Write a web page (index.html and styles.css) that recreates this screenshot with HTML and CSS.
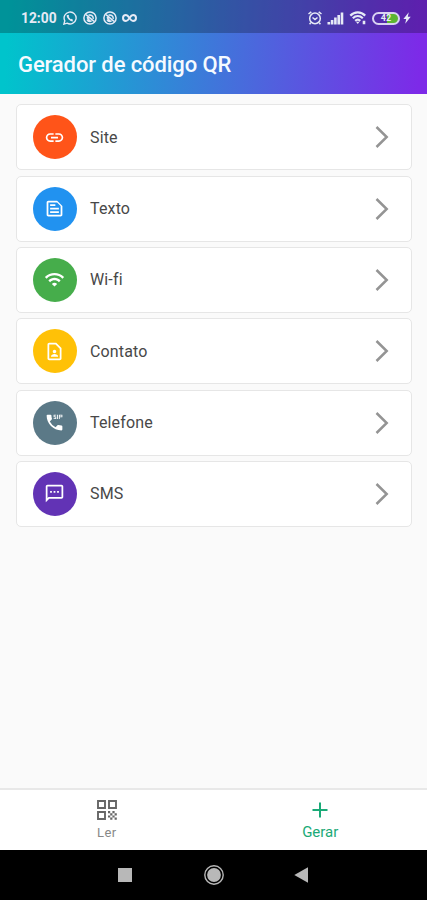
FILE: index.html
```html
<!DOCTYPE html>
<html lang="pt-BR">
<head>
<meta charset="utf-8">
<meta name="viewport" content="width=device-width, initial-scale=1">
<title>Gerador de código QR</title>
<link rel="stylesheet" href="styles.css">
</head>
<body>
<div class="screen">
  <header class="header">
    <div class="status">
      <div class="status-left">
        <span class="clock">12:00</span>
        <svg class="s-icon" viewBox="0 0 14 14" fill="none" stroke="currentColor" stroke-width="1.4"><path d="M.9 13.1l.9-3.3a6 6 0 1 1 2.3 2.4z"/><path d="M4.6 4.2c-.6 2 2.8 5.7 5 5.4M4.6 4.2l.9 1.6M9.6 9.6L8 8.4" stroke-width="1.8"/></svg>
        <svg class="s-icon" viewBox="0 0 14 14" fill="none" stroke="currentColor" stroke-width="1.5"><circle cx="7" cy="7" r="6.1"/><path d="M3 3.6l8 6.8M4 8.600a3.400 3.400 0 0 0 4.600 1.300M5.600 4.200a3.400 3.400 0 0 1 4.600 3.600M4 6.200l3 4"/></svg>
        <svg class="s-icon" viewBox="0 0 14 14" fill="none" stroke="currentColor" stroke-width="1.5"><circle cx="7" cy="7" r="6.1"/><path d="M3 3.6l8 6.8M4 8.600a3.400 3.400 0 0 0 4.600 1.300M5.600 4.200a3.400 3.400 0 0 1 4.600 3.600M4 6.200l3 4"/></svg>
        <svg class="s-loop" viewBox="0 0 15 14" fill="none" stroke="currentColor" stroke-width="2"><path d="M7.500 7C6 4.800 5.200 4 4 4a3 3 0 0 0 0 6c1.200 0 2-.8 3.500-3S9.800 4 11 4a3 3 0 0 1 0 6C9.800 10 9 9.200 7.500 7z"/></svg>
      </div>
      <div class="status-right">
        <svg class="alarm" viewBox="0 0 14 14" fill="none" stroke="currentColor" stroke-width="1.500"><circle cx="7" cy="7.400" r="5.300"/><path d="M.5 3L3.300.8M13.500 3L10.700.8M2.800 11.600l-1.200 1.600M11.200 11.600l1.200 1.600M4.500 6.500L7 8.500l2.500-2"/></svg>
        <svg class="signal" viewBox="0 0 16 13" fill="currentColor"><path d="M0 10h2.600v2.500H0zM3.300 8h2.600v4.500H3.300zM6.600 5.500h2.600v7H6.600zM9.900 3h2.600v9.500H9.900zM13.200.5h2.600v12h-2.600z"/></svg>
        <svg class="wifi-s" viewBox="0 0 17 14" fill="none" stroke="currentColor" stroke-width="2.200"><path d="M.8 4.600c4.300-4.300 10.600-4.300 14.900 0M3.300 7.300c3-2.900 7-2.900 10 0M5.700 9.900c1.600-1.500 3.500-1.500 5.100 0"/><path d="M6.500 10.700h3.500l-1.750 2.300zM13.200 9.800h2.600v3.400h-2.600z" fill="currentColor" stroke="none"/></svg>
        <span class="battery">42</span>
        <svg class="bolt" viewBox="0 0 8 12" fill="currentColor"><path d="M5.800.3L.4 7h2.800l-1 4.700L7.700 4.800H4.800z"/></svg>
      </div>
    </div>
    <h1 class="title">Gerador de código QR</h1>
  </header>

  <main class="list">
    <a class="card">
      <span class="disc site"><svg viewBox="0 0 24 24"><path d="M3.900 12c0-1.710 1.390-3.100 3.100-3.100h4V7H7c-2.760 0-5 2.240-5 5s2.240 5 5 5h4v-1.900H7c-1.710 0-3.100-1.390-3.100-3.100zM8 13h8v-2H8v2zm9-6h-4v1.900h4c1.710 0 3.100 1.390 3.100 3.100s-1.390 3.100-3.100 3.100h-4V17h4c2.760 0 5-2.240 5-5s-2.240-5-5-5z"/></svg></span>
      <span class="label">Site</span>
      <svg class="chevron" viewBox="0 0 14 22"><path d="M1.500 1l10.200 10L1.500 21"/></svg>
    </a>
    <a class="card">
      <span class="disc texto"><svg viewBox="0 0 24 24"><path d="M15 5l4 4v10H5V5h10m0-2H5c-1.100 0-2 .9-2 2v14c0 1.100.9 2 2 2h14c1.100 0 2-.9 2-2V9l-6-6zM7 7h6v2H7V7zm0 4h10v2H7v-2zm0 4h10v2H7v-2z"/></svg></span>
      <span class="label">Texto</span>
      <svg class="chevron" viewBox="0 0 14 22"><path d="M1.500 1l10.200 10L1.500 21"/></svg>
    </a>
    <a class="card">
      <span class="disc wifi"><svg viewBox="0 0 24 24"><path d="M1 9l2 2c4.970-4.970 13.030-4.970 18 0l2-2C16.930 2.930 7.080 2.930 1 9zm8 8l3 3 3-3c-1.650-1.660-4.340-1.660-6 0zm-4-4l2 2c2.760-2.760 7.240-2.760 10 0l2-2C15.140 9.140 8.870 9.140 5 13z"/></svg></span>
      <span class="label">Wi-fi</span>
      <svg class="chevron" viewBox="0 0 14 22"><path d="M1.500 1l10.200 10L1.500 21"/></svg>
    </a>
    <a class="card">
      <span class="disc contato"><svg viewBox="0 0 24 24"><path d="M13.170 4L18 8.830V20H6V4h7.170M14 2H6c-1.100 0-2 .9-2 2v16c0 1.100.9 2 2 2h12c1.100 0 2-.9 2-2V8l-6-6zm-2 12c1.100 0 2-.9 2-2s-.9-2-2-2-2 .9-2 2 .9 2 2 2zm4 3.430c0-.81-.48-1.530-1.220-1.850a6.950 6.950 0 0 0-5.560 0A2.010 2.010 0 0 0 8 17.430V18h8v-.57z"/></svg></span>
      <span class="label">Contato</span>
      <svg class="chevron" viewBox="0 0 14 22"><path d="M1.500 1l10.200 10L1.500 21"/></svg>
    </a>
    <a class="card">
      <span class="disc telefone"><svg viewBox="0 0 24 24"><path d="M20 15.500c-1.250 0-2.450-.2-3.570-.57-.35-.11-.74-.03-1.020.24l-2.200 2.200a15.050 15.050 0 0 1-6.590-6.590l2.200-2.200c.28-.28.360-.67.250-1.020A11.360 11.360 0 0 1 8.500 4c0-.55-.45-1-1-1H4c-.55 0-1 .45-1 1 0 9.390 7.610 17 17 17 .55 0 1-.45 1-1v-3.500c0-.55-.45-1-1-1zM16 3h-1v5h1V3zm-2 2h-2V4h2V3h-3v3h2v1h-2v1h3V5zm3-2v5h1V6h3V3h-4zm3 2h-2V4h2v1z"/></svg></span>
      <span class="label">Telefone</span>
      <svg class="chevron" viewBox="0 0 14 22"><path d="M1.500 1l10.200 10L1.500 21"/></svg>
    </a>
    <a class="card">
      <span class="disc sms"><svg viewBox="0 0 24 24"><path d="M20 2H4c-1.100 0-1.990.9-1.990 2L2 22l4-4h14c1.100 0 2-.9 2-2V4c0-1.100-.9-2-2-2zm0 14H5.170L4 17.170V4h16v12zM7 9h2v2H7zm4 0h2v2h-2zm4 0h2v2h-2z"/></svg></span>
      <span class="label">SMS</span>
      <svg class="chevron" viewBox="0 0 14 22"><path d="M1.500 1l10.200 10L1.500 21"/></svg>
    </a>
  </main>

  <nav class="tabs">
    <a class="tab">
      <svg class="qr" viewBox="0 0 20 20" fill="none" stroke="currentColor" stroke-width="1.900"><path d="M1 1h7v7H1zM12 1h7v7h-7zM1 12h7v7H1z"/><path d="M11 11h2.200v2.200H11zM13.200 13.200h2.200v2.200h-2.200zM15.400 11h2.200v2.200h-2.200zM17.600 13.200h2.200v2.200h-2.200zM11 15.400h2.200v2.200H11zM15.400 15.400h2.200v2.200h-2.200zM13.200 17.600h2.200v2.200h-2.200zM17.600 17.600h2.200v2.200h-2.200z" fill="currentColor" stroke="none"/></svg>
      <span class="tab-label small">Ler</span>
    </a>
    <a class="tab active">
      <svg class="plus" viewBox="0 0 16 16" stroke="currentColor" stroke-width="2"><path d="M8 .5v15M.5 8h15"/></svg>
      <span class="tab-label">Gerar</span>
    </a>
  </nav>

  <footer class="system">
    <span class="recent"></span>
    <svg class="home" viewBox="0 0 20 20"><circle cx="10" cy="10" r="9.200" fill="none" stroke="currentColor" stroke-width="1.400"/><circle cx="10" cy="10" r="6.900" fill="currentColor"/></svg>
    <svg class="back" viewBox="0 0 14 16"><path d="M14 .3v15.400L.3 8z" fill="currentColor"/></svg>
  </footer>
</div>
</body>
</html>
```
FILE: styles.css
```css
* {
  box-sizing: border-box;
}

body {
  margin: 0;
  font-family: Roboto, "Liberation Sans", sans-serif;
}

.screen {
  display: flex;
  flex-direction: column;
  width: 427px;
  height: 900px;
  background: #fafafa;
  overflow: hidden;
}

svg {
  display: block;
  flex: none;
}

/* Header */
.header {
  height: 94px;
  flex: none;
  background: linear-gradient(93deg, #00c4cc 2%, #7d2ae8 98%);
}

.status {
  display: flex;
  justify-content: space-between;
  height: 33px;
  padding: 3px 16px 0 21px;
  background: rgba(0, 0, 0, 0.25);
  color: #e6eaf6;
}

.status-left,
.status-right {
  display: flex;
  align-items: center;
}

.clock {
  width: 36px;
  margin-right: 6px;
  font-size: 13.8px;
  font-weight: 700;
  line-height: 16px;
}

.s-icon {
  width: 14px;
  height: 14px;
  margin-right: 6px;
}

.s-loop {
  width: 15px;
  height: 14px;
  margin-left: -1px;
}

.alarm {
  width: 14px;
  height: 14px;
  margin-right: 5px;
}

.signal {
  width: 17px;
  height: 13px;
  margin-right: 5px;
}

.wifi-s {
  width: 18px;
  height: 14px;
  margin-right: 5px;
}

.battery {
  width: 28px;
  height: 13px;
  margin-right: 3px;
  border: 2px solid #d9d2f2;
  border-radius: 7px;
  background: linear-gradient(90deg, transparent 56%, #5cb531 56%);
  font-size: 9px;
  font-weight: 700;
  line-height: 9px;
  text-align: center;
}

.bolt {
  width: 8px;
  height: 12px;
}

.title {
  margin: 0;
  padding-left: 18px;
  color: #f5faff;
  font-size: 22px;
  font-weight: 500;
  line-height: 63px;
  letter-spacing: -0.1px;
}

/* Options */
.list {
  display: flex;
  flex: 1;
  flex-direction: column;
  gap: 5.3px;
  padding: 10.4px 15px 0 16.4px;
}

.card {
  display: flex;
  align-items: center;
  height: 66px;
  padding: 0 22px 0 15.6px;
  border: 1px solid #e6e6e6;
  border-radius: 5px;
  background: #fff;
}

.disc {
  display: flex;
  align-items: center;
  justify-content: center;
  width: 44px;
  height: 44px;
  margin-right: 13px;
  border-radius: 50%;
}

.disc svg {
  width: 21px;
  height: 21px;
  fill: #fff;
}

.site { background: #ff5419; }
.texto { background: #2192f0; }
.wifi { background: #46ad4b; }
.contato { background: #ffc107; }
.telefone { background: #5b7987; }
.sms { background: #6233b5; }

.label {
  flex: 1;
  color: #484848;
  font-size: 16px;
  letter-spacing: 0.15px;
}

.chevron {
  width: 14px;
  height: 22px;
  fill: none;
  stroke: #949494;
  stroke-width: 2.5;
}

/* Bottom tabs */
.tabs {
  display: flex;
  flex: none;
  height: 62px;
  border-top: 2px solid #e8e8e8;
  background: #fff;
}

.tab {
  display: flex;
  flex: 1;
  flex-direction: column;
  align-items: center;
  padding-top: 10px;
  color: #666;
}

.active {
  color: #1aaa77;
}

.qr {
  width: 20px;
  height: 20px;
}

.plus {
  width: 16px;
  height: 16px;
  margin: 2px 0;
}

.tab-label {
  margin-top: 3px;
  font-size: 15px;
  line-height: 18px;
}

.small {
  margin-top: 4px;
  color: #888;
  font-size: 13px;
  letter-spacing: 0.4px;
}

/* Android navigation */
.system {
  display: flex;
  flex: none;
  align-items: center;
  height: 50px;
  padding-left: 118px;
  background: #000;
  color: #b8b8b8;
}

.recent {
  width: 14px;
  height: 14px;
  background: currentColor;
}

.home {
  width: 20px;
  height: 20px;
  margin-left: 72px;
}

.back {
  width: 14px;
  height: 16px;
  margin-left: 70px;
}
```
